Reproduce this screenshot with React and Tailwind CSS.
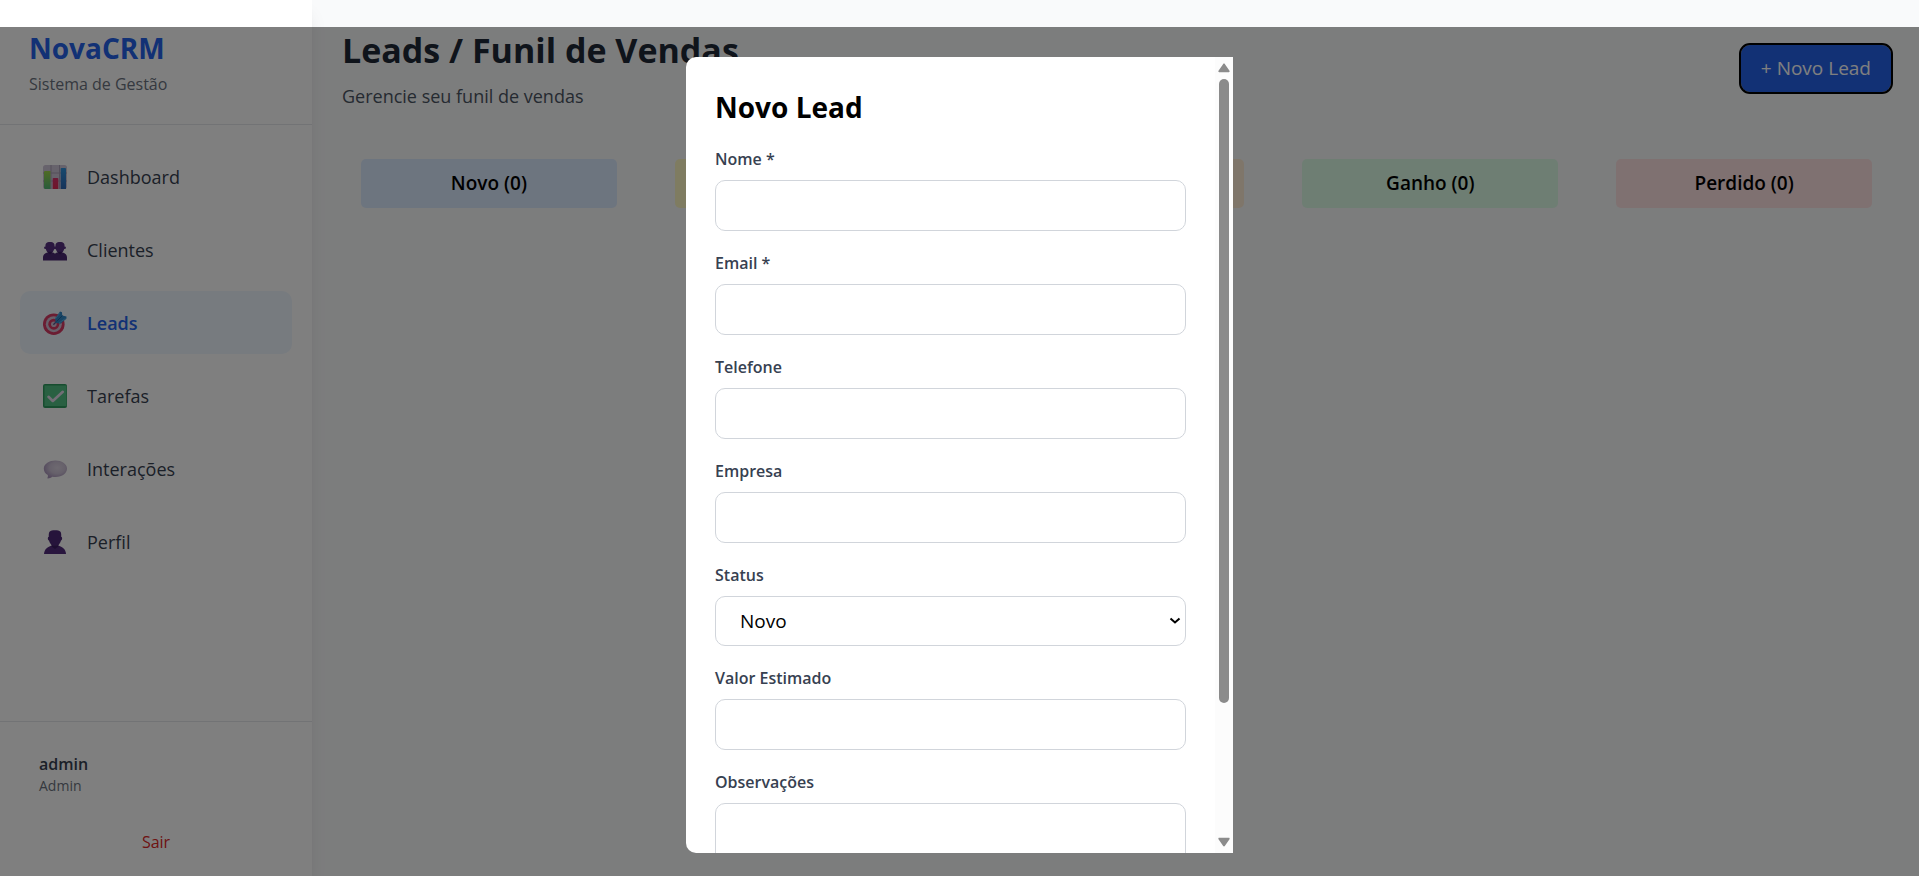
function ChartIcon() {
  return (
    <svg viewBox="0 0 24 24" className="size-6 shrink-0" aria-hidden="true">
      <defs>
        <linearGradient id="chartGreen" x1="0" y1="0" x2="0" y2="1">
          <stop offset="0" stopColor="#a0d84a" />
          <stop offset="1" stopColor="#52b878" />
        </linearGradient>
        <linearGradient id="chartRed" x1="0" y1="0" x2="0" y2="1">
          <stop offset="0" stopColor="#d9346e" />
          <stop offset="1" stopColor="#e02c54" />
        </linearGradient>
        <linearGradient id="chartBlue" x1="0" y1="0" x2="0" y2="1">
          <stop offset="0" stopColor="#2f93dc" />
          <stop offset="1" stopColor="#2d67b4" />
        </linearGradient>
      </defs>
      <rect width="24" height="24" rx="2.5" fill="#cfc6d8" />
      <path d="M0 8h24M0 16h24M8 0v24M16.5 0v24" stroke="#a99fb6" strokeWidth="1" />
      <path d="M2 6h5.5v18H2a1.5 1.5 0 0 1-1-1.500V7a1 1 0 0 1 1-1z" fill="url(#chartGreen)" />
      <path d="M10.500 13h4a.8.8 0 0 1 .8.8V24H9.700V13.800a.8.8 0 0 1 .8-.8z" fill="url(#chartRed)" />
      <path d="M18.500 3h3.700a.8.8 0 0 1 .8.8V24h-5.300V3.800a.8.8 0 0 1 .8-.8z" fill="url(#chartBlue)" />
    </svg>
  );
}

function PeopleIcon() {
  return (
    <svg viewBox="0 0 24 24" className="size-6 shrink-0" aria-hidden="true">
      <g fill="#573180">
        <path d="M3 5.500C4 4.200 5.200 4 7 4s3 .2 4 1.500c.6 1 .6 2.200.5 3.300 0 3.200-1.600 5.600-2.800 6.200h-3.400C4.100 14.400 2.500 12 2.500 8.800 2.400 7.700 2.400 6.500 3 5.500z" />
        <path d="M13 5.500C14 4.200 15.200 4 17 4s3 .2 4 1.500c.6 1 .6 2.200.5 3.300 0 3.200-1.600 5.600-2.800 6.200h-3.400c-1.200-.6-2.800-3-2.800-6.200-.1-1.100-.1-2.300.5-3.300z" />
        <circle cx="2.300" cy="9.800" r="1.200" />
        <circle cx="21.700" cy="9.800" r="1.200" />
        <circle cx="12" cy="9.800" r="1.500" />
      </g>
      <path d="M0 22.500v-3c0-3 2.500-5 5-5h4c1.300 0 2.300.5 3 1.200.7-.7 1.700-1.200 3-1.200h4c2.500 0 5 2 5 5v3z" fill="#4b2872" />
      <path d="M4.500 13.800h5L7 16.500zM14.500 13.800h5L17 16.500z" fill="#3b1c60" />
    </svg>
  );
}

function TargetIcon() {
  return (
    <svg viewBox="0 0 24 24" className="size-6 shrink-0" aria-hidden="true">
      <circle cx="10.800" cy="13.200" r="10.800" fill="#d63a64" />
      <circle cx="10.800" cy="13.200" r="8" fill="#d0bfd4" />
      <circle cx="10.800" cy="13.200" r="5.500" fill="#d63a64" />
      <circle cx="10.800" cy="13.200" r="2.800" fill="#d0bfd4" />
      <path d="M10.800 13.200 14.500 9.500" stroke="#54508a" strokeWidth="1.300" strokeLinecap="round" />
      <path d="m12.500 11.800-.3-4.600L17 .6l2 .6.200 3.400 4.300 1-.1 2.200-6 5z" fill="#3188c8" />
      <path d="m13.500 10.500 6-6" stroke="#1f659f" strokeWidth="1" />
      <path d="m12.300 8 4.700-6M16 12l6.500-4.500" stroke="#56ade0" strokeWidth="1" />
    </svg>
  );
}

function CheckIcon() {
  return (
    <svg viewBox="0 0 24 24" className="size-6 shrink-0" aria-hidden="true">
      <rect width="24" height="24" rx="2" fill="#2f9a5e" />
      <path d="M1.500 1.500h22V22h-22z" fill="#52c085" />
      <path d="m5.500 12.800 4.300 4.200L19.800 7.800" fill="none" stroke="#e4dced" strokeWidth="2.600" strokeLinecap="round" strokeLinejoin="round" />
    </svg>
  );
}

function SpeechIcon() {
  return (
    <svg viewBox="0 0 24 24" className="size-6 shrink-0" aria-hidden="true">
      <defs>
        <radialGradient id="speechFill" cx=".58" cy=".4" r=".6">
          <stop offset="0" stopColor="#ddd4e2" />
          <stop offset=".55" stopColor="#cdc2d6" />
          <stop offset="1" stopColor="#a994bb" />
        </radialGradient>
      </defs>
      <path d="M12.500 3.500C18.500 3.500 24 6.800 24 11.500s-4.500 8.500-11.500 8.500c-1 0-2.200 0-3.200-.2-1.300 1-3 1.600-4.300 1.700-.5 0-.7-.4-.5-.8.5-.9.600-1.800.3-2.700C2 16.500.8 14 .8 11.500c0-4.700 5.700-8 11.700-8z" fill="url(#speechFill)" />
    </svg>
  );
}

function PersonIcon() {
  return (
    <svg viewBox="0 0 24 24" className="size-6 shrink-0" aria-hidden="true">
      <path d="M1 24c.2-4.500 3.500-7.700 8-8.300h6c4.500.6 7.800 3.800 8 8.300z" fill="#532c7d" />
      <path d="M8.500 14h7v2.500L12 19l-3.500-2.500z" fill="#3b1c60" />
      <path d="M6.500 1.800C7.800.6 9.500.3 12 .3s4.200.3 5.500 1.500c.8 1.400.8 3.200.7 5 1.300.2 1.300 3.400-.2 3.600-.5 2.600-2.300 4.500-3.800 5.300H9.800C8.300 14.900 6.500 13 6 10.400c-1.500-.2-1.500-3.400-.2-3.600-.1-1.800-.1-3.600.7-5z" fill="#4d2876" />
    </svg>
  );
}

const navItems = [
  { label: "Dashboard", Icon: ChartIcon },
  { label: "Clientes", Icon: PeopleIcon },
  { label: "Leads", Icon: TargetIcon, active: true },
  { label: "Tarefas", Icon: CheckIcon },
  { label: "Interações", Icon: SpeechIcon },
  { label: "Perfil", Icon: PersonIcon },
];

const columns = [
  { title: "Novo (0)", color: "bg-[#dbeafe]" },
  { title: "Contato (0)", color: "bg-[#fef9c3]" },
  { title: "Proposta (0)", color: "bg-[#ffedd5]" },
  { title: "Ganho (0)", color: "bg-[#dcfce7]" },
  { title: "Perdido (0)", color: "bg-[#fee2e2]" },
];

function Sidebar() {
  return (
    <aside className="relative flex w-[312px] shrink-0 flex-col bg-white shadow-[0_12px_18px_-4px_rgb(0_0_0/0.1),0_5px_7px_-5px_rgb(0_0_0/0.1)]">
      <div className="border-b border-[#e5e7eb] px-[29px] py-7">
        <p className="text-[28px] leading-10 font-bold text-[#2563eb]">NovaCRM</p>
        <p className="mt-1 text-base leading-6 text-[#6b7280]">Sistema de Gestão</p>
      </div>
      <nav className="flex flex-1 flex-col gap-2.5 p-5">
        {navItems.map(({ label, Icon, active }) => (
          <a
            key={label}
            href={"#" + label.toLowerCase()}
            aria-current={active ? "page" : undefined}
            className={
              active
                ? "flex h-[63px] items-center gap-5 rounded-[10px] bg-[#eff6ff] px-[23px] text-lg font-semibold text-[#2563eb]"
                : "flex h-[63px] items-center gap-5 rounded-[10px] px-[23px] text-lg text-[#374151]"
            }
          >
            <Icon />
            {label}
          </a>
        ))}
      </nav>
      <div className="border-t border-[#e5e7eb] p-5">
        <div className="px-[19px] pt-2.5">
          <p className="text-base leading-6 font-semibold text-[#374151]">admin</p>
          <p className="text-sm leading-5 text-[#6b7280]">Admin</p>
        </div>
        <button type="button" className="mt-8 block w-full text-base leading-7 text-[#dc2626]">
          Sair
        </button>
      </div>
    </aside>
  );
}

function Field({ id, label, children }) {
  return (
    <div className="mb-5">
      <label htmlFor={id} className="mb-[9px] block text-base leading-6 font-semibold text-[#374151]">
        {label}
      </label>
      {children}
    </div>
  );
}

function TextField({ id, label, type = "text" }) {
  return (
    <Field id={id} label={label}>
      <input
        id={id}
        type={type}
        className="block h-[51px] w-full rounded-[10px] border border-[#d1d5db] px-5 text-[19px] text-black"
      />
    </Field>
  );
}

function LeadDialog() {
  return (
    <div className="fixed inset-x-0 top-[27px] bottom-0 flex justify-center bg-black/50 pt-[30px] pb-[23px]">
      <div
        role="dialog"
        aria-labelledby="dialog-title"
        className="flex w-[547px] max-w-full overflow-hidden rounded-l-[10px] bg-white"
      >
        <div className="min-w-0 flex-1 overflow-y-auto px-[29px] py-[30px] [scrollbar-width:none]">
          <h2 id="dialog-title" className="mb-5 text-[28px] leading-10 font-bold text-black">
            Novo Lead
          </h2>
          <form>
            <TextField id="nome" label="Nome *" />
            <TextField id="email" label="Email *" type="email" />
            <TextField id="telefone" label="Telefone" type="tel" />
            <TextField id="empresa" label="Empresa" />
            <Field id="status" label="Status">
              <div className="relative">
                <select
                  id="status"
                  className="block h-[50px] w-full appearance-none rounded-[10px] border border-[#d1d5db] bg-white px-6 text-[19px] text-black"
                >
                  <option>Novo</option>
                </select>
                <svg
                  viewBox="0 0 12 8"
                  className="pointer-events-none absolute top-[21px] right-[5px] h-2 w-3"
                  aria-hidden="true"
                >
                  <path d="m1.500 1.500 4.500 4 4.500-4" fill="none" stroke="#000" strokeWidth="2" />
                </svg>
              </div>
            </Field>
            <TextField id="valor" label="Valor Estimado" />
            <Field id="observacoes" label="Observações">
              <textarea
                id="observacoes"
                rows={4}
                className="block w-full resize-none rounded-[10px] border border-[#d1d5db] px-5 py-2.5 text-[19px] text-black"
              />
            </Field>
          </form>
        </div>
        <div className="flex w-[18px] shrink-0 flex-col items-center bg-[#fcfcfc] py-1.5" aria-hidden="true">
          <svg viewBox="0 0 12 10" className="h-2.5 w-3 shrink-0">
            <path d="M5.200 1 .500 7.800C.1 8.500.5 9.200 1.200 9.200h9.600c.7 0 1.100-.7.700-1.400L6.800 1c-.4-.6-1.200-.6-1.600 0z" fill="#8b8b8b" />
          </svg>
          <div className="my-1.5 w-2.5 flex-1">
            <div className="h-[83%] rounded-full bg-[#8b8b8b]" />
          </div>
          <svg viewBox="0 0 12 10" className="h-2.5 w-3 shrink-0">
            <path d="M5.200 9 .500 2.200C.1 1.500.5.8 1.200.8h9.600c.7 0 1.100.7.700 1.400L6.800 9c-.4.600-1.200.600-1.600 0z" fill="#8b8b8b" />
          </svg>
        </div>
      </div>
    </div>
  );
}

export default function App() {
  return (
    <div className="flex min-h-screen bg-[#f9fafb] font-['Open_Sans','Noto_Sans',sans-serif]">
      <Sidebar />
      <main className="min-w-0 flex-1 pt-7 pr-7 pl-[30px]">
        <header className="flex items-start justify-between">
          <div>
            <h1 className="text-[34px] leading-[44px] font-bold text-[#1f2937]">Leads / Funil de Vendas</h1>
            <p className="mt-2.5 text-lg leading-7 text-[#4b5563]">Gerencie seu funil de vendas</p>
          </div>
          <button
            type="button"
            className="mt-[17px] h-[47px] rounded-[9px] bg-[#2563eb] px-5 text-[19px] text-white outline-2 outline-black"
          >
            + Novo Lead
          </button>
        </header>
        <section className="mt-[49px] grid grid-cols-5 gap-5">
          {columns.map((column) => (
            <div key={column.title} className="px-[19px]">
              <h3 className={`${column.color} rounded-[5px] py-[11px] text-center text-[19px] leading-[27px] font-semibold text-black`}>
                {column.title}
              </h3>
            </div>
          ))}
        </section>
      </main>
      <LeadDialog />
    </div>
  );
}
